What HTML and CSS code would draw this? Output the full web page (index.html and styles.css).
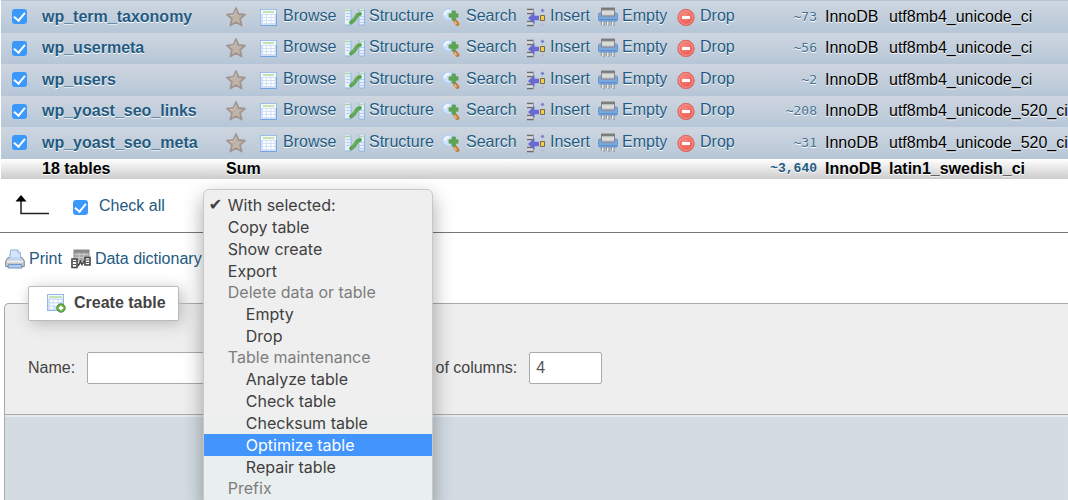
FILE: index.html
```html
<!DOCTYPE html>
<html lang="en">
<head>
    <meta charset="UTF-8">
    <meta name="viewport" content="width=device-width, initial-scale=1.0">
    <title>Tables</title>
    <link rel="stylesheet" href="styles.css">
</head>
<body>
    <!-- icon set -->
    <svg class="sprite" aria-hidden="true">
        <defs>
            <linearGradient id="g-star" x1="0" y1="0" x2="0" y2="1">
                <stop offset="0" stop-color="#b5adaa"/>
                <stop offset="1" stop-color="#c9b8a4"/>
            </linearGradient>
            <radialGradient id="g-drop" cx="0.4" cy="0.35" r="0.7">
                <stop offset="0" stop-color="#f88a80"/>
                <stop offset="1" stop-color="#e9524c"/>
            </radialGradient>
            <linearGradient id="g-gray" x1="0" y1="0" x2="0" y2="1">
                <stop offset="0" stop-color="#777"/>
                <stop offset="0.5" stop-color="#e4e4e4"/>
                <stop offset="1" stop-color="#c4c4c4"/>
            </linearGradient>
        </defs>
        <symbol id="star" viewBox="0 0 20 20">
            <path d="M10 1l2.600 6 6.400.6-4.900 4.300 1.500 6.600-5.600-3.400-5.600 3.400 1.500-6.600L1 7.600 7.400 7z" fill="url(#g-star)" stroke="#a0958f" stroke-width="1.800" stroke-linejoin="round"/>
            <path d="M10 3.500L8.300 8l-4.300.6" fill="none" stroke="#cfc7c1"/>
        </symbol>
        <symbol id="browse" viewBox="0 0 20 20">
            <rect x="1.500" y="2.500" width="16" height="16" fill="#cfe0f7" stroke="#9abde9"/>
            <rect x="2" y="3" width="15" height="4" fill="#f4f9f5"/>
            <path d="M4 5h11" stroke="#b0d89c" stroke-width="1.400"/>
            <path d="M4 8h3v2H4zM8 8h3.500v2H8zM12.500 8h3v2h-3zM4 11h3v2H4zM8 11h3.500v2H8zM12.500 11h3v2h-3zM4 14h3v2H4zM8 14h3.500v2H8zM12.500 14h3v2h-3z" fill="#fff"/>
            <path d="M1.500 18.500h16V7" fill="none" stroke="#74a3e4"/>
        </symbol>
        <symbol id="structure" viewBox="0 0 20 20">
            <path d="M0 2h6v16H0zM14 2h5v16h-5z" fill="#e6f0fb"/>
            <path d="M1 6.500h4M1 9.500h4M1 12.500h4M15 9.500h4M15 12.500h4M15 15.500h4" stroke="#b7cfed"/>
            <path d="M0 3.500h5M14.500 3.500h4" stroke="#a5d692" stroke-width="1.400"/>
            <path d="M6 2v16M0 18h6M14 18h5.500V2M14 2v16" stroke="#8cb3e6" fill="none"/>
            <path d="M6 15.500L9 13l3.500-5L15 7" stroke="#5aa551" stroke-width="3.800" fill="none" stroke-linecap="round" stroke-linejoin="round"/>
            <path d="M7.500 14l4.500-6" stroke="#6db35e" stroke-width="1.200" fill="none"/>
        </symbol>
        <symbol id="search" viewBox="0 0 20 20">
            <path d="M13 14l2.500 3" stroke="#c0813f" stroke-width="4" stroke-linecap="round"/>
            <path d="M12.500 14.500l2 2.500" stroke="#ecc08c" stroke-width="1.300"/>
            <circle cx="6.500" cy="7.500" r="5.800" fill="#cfe3fa" stroke="#b4d1f2" stroke-width="1.400"/>
            <path d="M2.500 8a4 4 0 0 1 5-4" stroke="#f4faff" stroke-width="1.800" fill="none"/>
            <path d="M10 4h3.400v2.800H16v3.400h-2.600V13H10v-2.800H7V6.800h3z" fill="#5ea655" stroke="#5a9b53" stroke-width="0.800" stroke-linejoin="round"/>
        </symbol>
        <symbol id="insert" viewBox="0 0 20 20">
            <path d="M1 2.500h7M1 6.500h6M1 14.500h6M1 18.500h7" stroke="#6b6b6b" stroke-width="1.600"/>
            <path d="M7.500 2v4M7.500 15v4" stroke="#9a9a9a"/>
            <path d="M1 3.500h6v2H1zM1 15.500h6v2H1z" fill="#dcdcdc"/>
            <path d="M2 11l6.500-6v3.700H13v4.600H8.500V17z" fill="#6a69d0"/>
            <path d="M14.500 8.500h4v5h-4z" fill="#f7cc48" stroke="#776a45"/>
            <path d="M16.500 1.500l2 2-2 2-2-2z" fill="#7f7ed6"/>
            <path d="M16.500 16v3M15 17.500h3" stroke="#b7b7d6"/>
        </symbol>
        <symbol id="empty" viewBox="0 0 20 20">
            <path d="M3.500 13v5M6 13v6M8.500 13v5M11 13v6M13.500 13v5M16 13v6" stroke="#9a9a9a" stroke-width="1.400"/>
            <path d="M4.700 13v5M9.700 13v5M14.700 13v5" stroke="#f2f2f2" stroke-width="1.200"/>
            <rect x="0.500" y="6" width="19" height="8" rx="1.500" fill="#7aa7de" stroke="#6594cf"/>
            <path d="M1.500 12.500h17" stroke="#5f8fcb"/>
            <rect x="3.500" y="1" width="13" height="8" fill="url(#g-gray)" stroke="#858585"/>
            <path d="M3.500 2h13" stroke="#777" stroke-width="1.600"/>
        </symbol>
        <symbol id="drop" viewBox="0 0 20 20">
            <circle cx="10" cy="10.500" r="8.200" fill="url(#g-drop)" stroke="#dc6a62"/>
            <circle cx="10" cy="10.500" r="6.800" fill="none" stroke="#f6a29b" stroke-width="0.800"/>
            <rect x="6" y="9" width="8" height="3" rx="0.500" fill="#fff"/>
        </symbol>
        <symbol id="print" viewBox="0 0 20 20">
            <path d="M5.500 1H13l2.500 3v6h-11z" fill="#d5e6fb" stroke="#8fb0d8"/>
            <path d="M13 1v3h2.500" fill="#fff" stroke="#8fb0d8"/>
            <path d="M3 8.500h14l2.300 3.500v5.500H.7V12z" fill="#c4c7cc" stroke="#858a92"/>
            <path d="M4.500 8h11v3h-11z" fill="#bcd6f6"/>
            <path d="M2 12.500h16" stroke="#f1f2f4" stroke-width="1.800"/>
            <path d="M3.500 15.500h13l.5 3.500h-14z" fill="#a9cbf5" stroke="#7894b8"/>
        </symbol>
        <symbol id="dictionary" viewBox="0 0 20 20">
            <rect x="3" y="1" width="15" height="11" fill="#a9a9a9" stroke="#8a8a8a"/>
            <path d="M3 2.500h15" stroke="#858585" stroke-width="2"/>
            <path d="M3.500 5.500h14M3.500 8.500h14M8 4v8M13 4v8" stroke="#cfcfcf" stroke-width="0.800"/>
            <path d="M1 10h5v8.500H1zM14 8.500h5V16h-5z" fill="#fff" stroke="#444" stroke-width="1.600"/>
            <path d="M2 12.500h3M2 15.500h3M15 11h3M15 13.500h3" stroke="#555"/>
            <path d="M7 17l2.500-4.500 1.500 3 2.500-3.500" fill="none" stroke="#444" stroke-width="1.600"/>
        </symbol>
        <symbol id="create" viewBox="0 0 20 20">
            <rect x="1.500" y="1.500" width="16" height="16" fill="#cfe0f7" stroke="#93b8e8"/>
            <rect x="2" y="2" width="15" height="3.500" fill="#f4f9f5"/>
            <path d="M3 4h13" stroke="#a9d593" stroke-width="1.300"/>
            <path d="M4 7h3v2H4zM8 7h3.500v2H8zM12.500 7h3v2h-3zM4 10.500h3v2H4zM8 10.500h3.500v2H8zM4 14h3v2H4z" fill="#fff"/>
            <circle cx="15" cy="15" r="4.200" fill="#6bb04c" stroke="#4e8f3a"/>
            <path d="M15 12.800v4.400M12.800 15h4.400" stroke="#fff" stroke-width="1.800"/>
        </symbol>
    </svg>

    <table class="tables">
        <colgroup>
            <col class="col-check">
            <col class="col-name">
            <col class="col-star">
            <col class="col-browse">
            <col class="col-structure">
            <col class="col-search">
            <col class="col-insert">
            <col class="col-empty">
            <col class="col-drop">
            <col class="col-rows">
            <col class="col-engine">
            <col>
        </colgroup>
        <tbody>
            <tr>
                <td><input type="checkbox" class="check" aria-label="wp_term_taxonomy" checked></td>
                <th><a href="#">wp_term_taxonomy</a></th>
                <td><a href="#" class="action" aria-label="Favorite"><svg class="icon"><use href="#star"/></svg></a></td>
                <td><a href="#" class="action"><svg class="icon"><use href="#browse"/></svg>Browse</a></td>
                <td><a href="#" class="action"><svg class="icon"><use href="#structure"/></svg>Structure</a></td>
                <td><a href="#" class="action"><svg class="icon"><use href="#search"/></svg>Search</a></td>
                <td><a href="#" class="action"><svg class="icon"><use href="#insert"/></svg>Insert</a></td>
                <td><a href="#" class="action"><svg class="icon"><use href="#empty"/></svg>Empty</a></td>
                <td><a href="#" class="action"><svg class="icon"><use href="#drop"/></svg>Drop</a></td>
                <td class="rows"><a href="#">~73</a></td>
                <td>InnoDB</td>
                <td>utf8mb4_unicode_ci</td>
            </tr>
            <tr>
                <td><input type="checkbox" class="check" aria-label="wp_usermeta" checked></td>
                <th><a href="#">wp_usermeta</a></th>
                <td><a href="#" class="action" aria-label="Favorite"><svg class="icon"><use href="#star"/></svg></a></td>
                <td><a href="#" class="action"><svg class="icon"><use href="#browse"/></svg>Browse</a></td>
                <td><a href="#" class="action"><svg class="icon"><use href="#structure"/></svg>Structure</a></td>
                <td><a href="#" class="action"><svg class="icon"><use href="#search"/></svg>Search</a></td>
                <td><a href="#" class="action"><svg class="icon"><use href="#insert"/></svg>Insert</a></td>
                <td><a href="#" class="action"><svg class="icon"><use href="#empty"/></svg>Empty</a></td>
                <td><a href="#" class="action"><svg class="icon"><use href="#drop"/></svg>Drop</a></td>
                <td class="rows"><a href="#">~56</a></td>
                <td>InnoDB</td>
                <td>utf8mb4_unicode_ci</td>
            </tr>
            <tr>
                <td><input type="checkbox" class="check" aria-label="wp_users" checked></td>
                <th><a href="#">wp_users</a></th>
                <td><a href="#" class="action" aria-label="Favorite"><svg class="icon"><use href="#star"/></svg></a></td>
                <td><a href="#" class="action"><svg class="icon"><use href="#browse"/></svg>Browse</a></td>
                <td><a href="#" class="action"><svg class="icon"><use href="#structure"/></svg>Structure</a></td>
                <td><a href="#" class="action"><svg class="icon"><use href="#search"/></svg>Search</a></td>
                <td><a href="#" class="action"><svg class="icon"><use href="#insert"/></svg>Insert</a></td>
                <td><a href="#" class="action"><svg class="icon"><use href="#empty"/></svg>Empty</a></td>
                <td><a href="#" class="action"><svg class="icon"><use href="#drop"/></svg>Drop</a></td>
                <td class="rows"><a href="#">~2</a></td>
                <td>InnoDB</td>
                <td>utf8mb4_unicode_ci</td>
            </tr>
            <tr>
                <td><input type="checkbox" class="check" aria-label="wp_yoast_seo_links" checked></td>
                <th><a href="#">wp_yoast_seo_links</a></th>
                <td><a href="#" class="action" aria-label="Favorite"><svg class="icon"><use href="#star"/></svg></a></td>
                <td><a href="#" class="action"><svg class="icon"><use href="#browse"/></svg>Browse</a></td>
                <td><a href="#" class="action"><svg class="icon"><use href="#structure"/></svg>Structure</a></td>
                <td><a href="#" class="action"><svg class="icon"><use href="#search"/></svg>Search</a></td>
                <td><a href="#" class="action"><svg class="icon"><use href="#insert"/></svg>Insert</a></td>
                <td><a href="#" class="action"><svg class="icon"><use href="#empty"/></svg>Empty</a></td>
                <td><a href="#" class="action"><svg class="icon"><use href="#drop"/></svg>Drop</a></td>
                <td class="rows"><a href="#">~208</a></td>
                <td>InnoDB</td>
                <td>utf8mb4_unicode_520_ci</td>
            </tr>
            <tr>
                <td><input type="checkbox" class="check" aria-label="wp_yoast_seo_meta" checked></td>
                <th><a href="#">wp_yoast_seo_meta</a></th>
                <td><a href="#" class="action" aria-label="Favorite"><svg class="icon"><use href="#star"/></svg></a></td>
                <td><a href="#" class="action"><svg class="icon"><use href="#browse"/></svg>Browse</a></td>
                <td><a href="#" class="action"><svg class="icon"><use href="#structure"/></svg>Structure</a></td>
                <td><a href="#" class="action"><svg class="icon"><use href="#search"/></svg>Search</a></td>
                <td><a href="#" class="action"><svg class="icon"><use href="#insert"/></svg>Insert</a></td>
                <td><a href="#" class="action"><svg class="icon"><use href="#empty"/></svg>Empty</a></td>
                <td><a href="#" class="action"><svg class="icon"><use href="#drop"/></svg>Drop</a></td>
                <td class="rows"><a href="#">~31</a></td>
                <td>InnoDB</td>
                <td>utf8mb4_unicode_520_ci</td>
            </tr>
        </tbody>
        <tfoot>
            <tr>
                <th></th>
                <th>18 tables</th>
                <th colspan="7">Sum</th>
                <th class="rows"><a href="#">~3,640</a></th>
                <th>InnoDB</th>
                <th>latin1_swedish_ci</th>
            </tr>
        </tfoot>
    </table>

    <div class="check-all">
        <svg class="arrow" viewBox="0 0 38 22" aria-hidden="true">
            <path d="M8 4v15.500h28" fill="none" stroke="#222" stroke-width="1.500"/>
            <path d="M8 1l5.500 6.500h-11z" fill="#000"/>
        </svg>
        <input type="checkbox" class="check" id="checkall" checked>
        <label for="checkall">Check all</label>
        <div class="with-selected">
            <ul class="menu">
                <li><button type="button"><span class="tick">✔</span>With selected:</button></li>
                <li><button type="button">Copy table</button></li>
                <li><button type="button">Show create</button></li>
                <li><button type="button">Export</button></li>
                <li class="group">Delete data or table</li>
                <li class="sub"><button type="button">Empty</button></li>
                <li class="sub"><button type="button">Drop</button></li>
                <li class="group">Table maintenance</li>
                <li class="sub"><button type="button">Analyze table</button></li>
                <li class="sub"><button type="button">Check table</button></li>
                <li class="sub"><button type="button">Checksum table</button></li>
                <li class="sub"><button type="button" class="active">Optimize table</button></li>
                <li class="sub"><button type="button">Repair table</button></li>
                <li class="group">Prefix</li>
            </ul>
        </div>
    </div>

    <div class="links">
        <a href="#"><svg class="icon"><use href="#print"/></svg>Print</a>
        <a href="#"><svg class="icon"><use href="#dictionary"/></svg>Data dictionary</a>
    </div>

    <form class="create-form">
        <fieldset>
            <legend><svg class="icon"><use href="#create"/></svg>Create table</legend>
            <div class="fields">
                <label for="name">Name:</label>
                <input type="text" id="name" class="name">
                <label for="columns">Number of columns:</label>
                <input type="text" id="columns" class="columns" value="4">
            </div>
        </fieldset>
        <div class="footer"></div>
    </form>
</body>
</html>
```
FILE: styles.css
```css
body{
    display: flex;
    flex-direction: column;
    min-height: 100vh;
    margin: 0;
    overflow: hidden;
    background: #fff;
    color: #444;
    font: 16px/20px "Liberation Sans", Arial, Helvetica, sans-serif;
}
*{
    box-sizing: border-box;
}
a{
    color: #235a81;
    text-decoration: none;
}
.sprite{
    position: absolute;
    width: 0;
    height: 0;
}
.icon{
    width: 20px;
    height: 20px;
    flex: none;
}
.check{
    appearance: none;
    display: grid;
    place-items: center;
    flex: none;
    width: 15px;
    height: 15px;
    margin: 0;
    border-radius: 3px;
    background: #3b99fc;
}
.check:checked::after{
    content: "";
    width: 5px;
    height: 9px;
    margin-bottom: 2px;
    border: solid #fff;
    border-width: 0 2px 2px 0;
    transform: rotate(40deg);
}

/* table list */
.tables{
    width: calc(100% - 1px);
    margin-left: 1px;
    table-layout: fixed;
    border-collapse: collapse;
    border-top: 1px solid #b4c4d4;
    color: #000;
    white-space: nowrap;
    text-shadow: 0 1px 0 #fff;
}
.tables th,
.tables td{
    padding: 0;
    text-align: left;
    vertical-align: middle;
}
.tables tbody tr{
    height: 31px;
    background: linear-gradient(#ced6e0, #b6c6d7);
}
.tables tbody tr:nth-child(odd){
    height: 32px;
}
.tables tfoot tr{
    height: 20px;
    background: linear-gradient(#fff, #ccc);
}
.tables td:first-child{
    padding-left: 11px;
}
.tables .rows{
    padding-right: 8px;
    text-align: right;
    font-family: "DejaVu Sans Mono", monospace;
    font-size: 13px;
}
.tables td.rows a{
    color: #44708f;
}
.tables tfoot .rows{
    font-family: "Liberation Mono", "Courier New", monospace;
}
.col-check{ width: 41px; }
.col-name{ width: 184px; }
.col-star{ width: 33px; }
.col-browse{ width: 86px; }
.col-structure{ width: 97px; }
.col-search{ width: 84px; }
.col-insert{ width: 72px; }
.col-empty{ width: 78px; }
.col-drop{ width: 60px; }
.col-rows{ width: 89px; }
.col-engine{ width: 64px; }
.action{
    display: flex;
    gap: 4px;
    line-height: 18px;
}

/* check all row */
.check-all{
    display: flex;
    align-items: center;
    height: 54px;
    padding-left: 13px;
    border-bottom: 1px solid #777;
    color: #235a81;
}
.check-all .check{
    margin-top: 4px;
}
.arrow{
    width: 38px;
    height: 22px;
    margin-right: 22px;
}
.check-all label{
    margin: 2px 0 0 11px;
}
.with-selected{
    position: relative;
    align-self: stretch;
    margin-left: 38px;
}
.menu{
    position: absolute;
    top: 10px;
    left: 0;
    z-index: 1;
    width: 230px;
    margin: 0;
    padding: 4px 0;
    list-style: none;
    border: 1px solid #c8c8c8;
    border-radius: 6px;
    background: linear-gradient(#efefef 70%, #e9eeee 85%);
    box-shadow: 0 8px 20px rgba(0, 0, 0, 0.35);
    color: #404040;
    font: 16px/22px Inter, Roboto, sans-serif;
}
.menu button{
    position: relative;
    display: block;
    width: 100%;
    height: 22px;
    padding: 0 0 0 24px;
    border: none;
    background: none;
    color: inherit;
    font: inherit;
    text-align: left;
}
.menu .sub button{
    padding-left: 42px;
}
.menu .group{
    height: 21px;
    padding-left: 24px;
    line-height: 21px;
    color: #7d7d7d;
}
.menu .sub .active{
    background: #4195fc;
    color: #fff;
}
.tick{
    position: absolute;
    left: 5px;
    font-family: "DejaVu Sans", sans-serif;
}

/* print, data dictionary */
.links{
    display: flex;
    gap: 9px;
    padding: 16px 0 17px 5px;
}
.links a{
    display: flex;
    gap: 4px;
}

/* create table */
.create-form{
    display: flex;
    flex-direction: column;
    flex: 1;
    padding-left: 4px;
}
fieldset{
    margin: 0;
    padding: 31px 0 30px 23px;
    border: 1px solid #aaa;
    border-width: 1px 0 0 1px;
    border-radius: 5px 0 0 0;
    background: #eee;
}
legend{
    display: flex;
    gap: 8px;
    align-items: center;
    height: 35px;
    padding: 0 12px 0 17px;
    border: 1px solid #bbb;
    border-radius: 2px;
    background: #fff;
    box-shadow: 3px 3px 15px #bbb;
    font-weight: bold;
}
.fields{
    display: flex;
    align-items: center;
}
.fields input{
    height: 32px;
    margin: 0 18px 0 12px;
    padding: 0 6px;
    border: 1px solid #aaa;
    border-radius: 2px;
    background: #fff;
    color: #555;
    font: inherit;
}
.fields .name{
    width: 269px;
}
.fields .columns{
    width: 73px;
}
.footer{
    flex: 1;
    min-height: 80px;
    border: 1px solid #aaa;
    border-width: 1px 0 0 1px;
    background: #d3dce3;
    box-shadow: inset 0 2px 1px #e6ebef;
}
```
